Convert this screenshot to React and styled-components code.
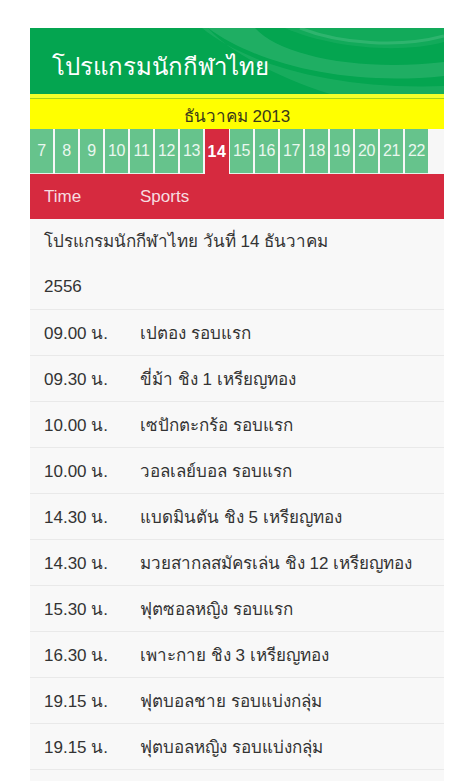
import React from 'react';
import styled, { createGlobalStyle } from 'styled-components';

const GlobalStyle = createGlobalStyle`
  body {
    margin: 0;
    background: #ffffff;
    font-family: 'Liberation Sans', 'Noto Sans', Arial, sans-serif;
  }
`;

const swirl = encodeURIComponent(
  `<svg xmlns="http://www.w3.org/2000/svg" width="414" height="66" viewBox="0 0 414 66">
    <path d="M172 0 C215 35 300 62 414 58 L414 66 L300 66 C250 50 200 25 178 0 Z" fill="rgba(255,255,255,0.08)"/>
    <path d="M178 0 C230 38 320 58 414 48 L414 34 C330 44 250 28 225 0 Z" fill="rgba(255,255,255,0.11)"/>
    <path d="M255 0 C300 20 370 26 414 14 L414 0 Z" fill="rgba(255,255,255,0.06)"/>
    <path d="M270 0 C310 16 370 20 414 8" stroke="rgba(255,255,255,0.12)" stroke-width="3" fill="none"/>
  </svg>`
);

const Page = styled.div`
  width: 414px;
  margin: 28px auto 0;
  min-height: calc(100vh - 28px);
  background: #f8f8f8;
  display: flex;
  flex-direction: column;
`;

const Header = styled.div`
  height: 70px;
  background-color: #04a550;
  background-image: url("data:image/svg+xml,${swirl}");
  background-repeat: no-repeat;
  display: flex;
  align-items: center;
  padding: 10px 0 0 22px;
  box-sizing: border-box;
  border-bottom: 4px solid #f4ff2a;
`;

const Title = styled.h1`
  margin: 0;
  font-size: 24px;
  font-weight: normal;
  color: #ffffff;
`;

const MonthBar = styled.div`
  height: 31px;
  background: #ffff00;
  border-top: 1px solid #a6d21a;
  display: flex;
  align-items: flex-end;
  justify-content: center;
  font-size: 17px;
  color: #3a3a1a;
  padding-bottom: 1px;
  box-sizing: border-box;
  line-height: 22px;
`;

const DateStrip = styled.div`
  display: flex;
  height: 45px;
  background: #f7f7f7;
`;

const DateCell = styled.div`
  width: ${(p) => (p.$active ? '24px' : '23px')};
  margin-right: ${(p) => (p.$active ? '1px' : '2px')};
  height: ${(p) => (p.$active ? '45px' : '44px')};
  border-bottom: ${(p) => (p.$active ? 'none' : '1px solid #e4f2e8')};
  background: ${(p) => (p.$active ? '#d62a3f' : '#66c38c')};
  color: ${(p) => (p.$active ? '#ffffff' : '#eaf7ef')};
  font-weight: ${(p) => (p.$active ? 'bold' : 'normal')};
  font-size: 16px;
  display: flex;
  align-items: center;
  justify-content: center;
  letter-spacing: ${(p) => (p.$active ? '0.5px' : '-0.3px')};
`;

const HeadRow = styled.div`
  height: 45px;
  background: #d62a3f;
  display: flex;
  align-items: center;
  padding-left: 14px;
  font-size: 17px;
  color: #f7dde0;
`;

const TimeCol = styled.div`
  width: 96px;
  flex-shrink: 0;
`;

const IntroRow = styled.div`
  padding: 0 14px;
  line-height: 45px;
  font-size: 17px;
  color: #333333;
  border-bottom: 1px solid #e9e9e9;
`;

const Row = styled.div`
  height: 45px;
  display: flex;
  align-items: center;
  padding-left: 14px;
  font-size: 17px;
  color: #333333;
  border-bottom: 1px solid #e9e9e9;
`;

const days = [7, 8, 9, 10, 11, 12, 13, 14, 15, 16, 17, 18, 19, 20, 21, 22];

const schedule = [
  ['09.00 น.', 'เปตอง รอบแรก'],
  ['09.30 น.', 'ขี่ม้า ชิง 1 เหรียญทอง'],
  ['10.00 น.', 'เซปักตะกร้อ รอบแรก'],
  ['10.00 น.', 'วอลเลย์บอล รอบแรก'],
  ['14.30 น.', 'แบดมินตัน ชิง 5 เหรียญทอง'],
  ['14.30 น.', 'มวยสากลสมัครเล่น ชิง 12 เหรียญทอง'],
  ['15.30 น.', 'ฟุตซอลหญิง รอบแรก'],
  ['16.30 น.', 'เพาะกาย ชิง 3 เหรียญทอง'],
  ['19.15 น.', 'ฟุตบอลชาย รอบแบ่งกลุ่ม'],
  ['19.15 น.', 'ฟุตบอลหญิง รอบแบ่งกลุ่ม'],
];

function App() {
  return (
    <>
      <GlobalStyle />
      <Page>
        <Header>
          <Title>โปรแกรมนักกีฬาไทย</Title>
        </Header>
        <MonthBar>ธันวาคม 2013</MonthBar>
        <DateStrip>
          {days.map((d) => (
            <DateCell key={d} $active={d === 14}>
              {d}
            </DateCell>
          ))}
        </DateStrip>
        <HeadRow>
          <TimeCol>Time</TimeCol>
          <div>Sports</div>
        </HeadRow>
        <IntroRow>
          โปรแกรมนักกีฬาไทย วันที่ 14 ธันวาคม
          <br />
          2556
        </IntroRow>
        {schedule.map((item, i) => (
          <Row key={i}>
            <TimeCol>{item[0]}</TimeCol>
            <div>{item[1]}</div>
          </Row>
        ))}
      </Page>
    </>
  );
}

export default App;
